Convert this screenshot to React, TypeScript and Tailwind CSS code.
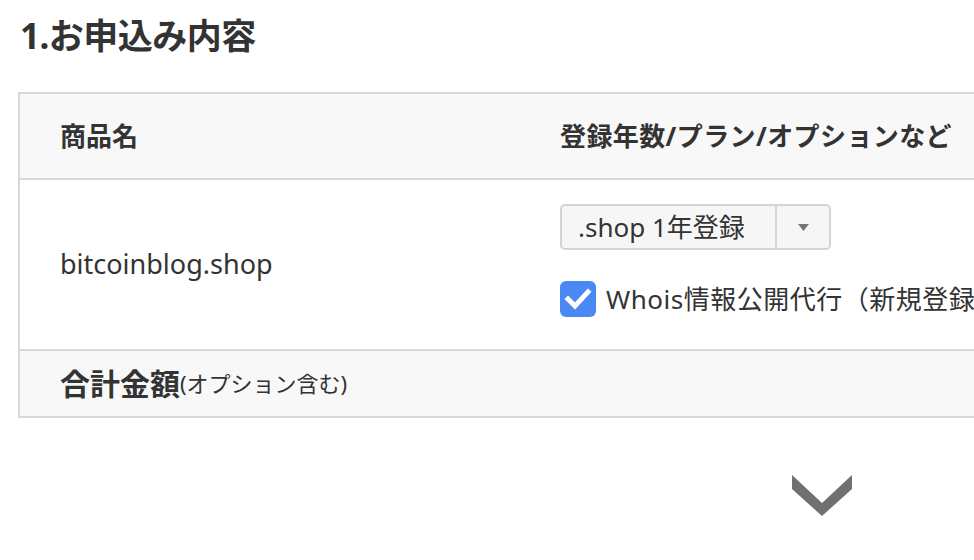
import React from "react";

export default function App() {
  const font = { fontFamily: '"Noto Sans", "Noto Sans CJK JP", sans-serif' };
  return (
    <div className="w-[974px] h-[560px] overflow-hidden bg-white text-[#333]" style={font}>
      <h1 className="pl-[20px] pt-[12px] h-[92px] text-[35px] font-bold leading-[48px] tracking-[-0.5px]">1.お申込み内容</h1>
      <div className="ml-[18px] w-[1100px] border-2 border-[#d8d8d8]">
        <div className="flex h-[86px] items-center bg-[#f8f8f8] border-b-2 border-[#d8d8d8] text-[26px] font-bold">
          <div className="w-[540px] pl-[40px]">商品名</div>
          <div className="flex-1 tracking-[0.4px]">登録年数/プラン/オプションなど</div>
        </div>
        <div className="flex h-[169px] items-center bg-white">
          <div className="w-[540px] pl-[40px] text-[27px]">bitcoinblog.shop</div>
          <div className="flex-1 flex flex-col pb-[8px]">
            <div className="flex h-[46px] w-[271px] rounded-[5px] border-2 border-[#d4d4d4] bg-[#f6f6f6]">
              <div className="flex w-[215px] items-center pl-[16px] text-[26px] border-r-2 border-[#d4d4d4]">.shop 1年登録</div>
              <div className="flex flex-1 items-center justify-center">
                <svg width="11" height="7" viewBox="0 0 11 7"><polygon points="0,0 11,0 5.5,7" fill="#777" /></svg>
              </div>
            </div>
            <div className="mt-[31px] flex h-[36px] items-center gap-[10px]">
              <div className="flex h-[36px] w-[36px] shrink-0 items-center justify-center rounded-[6px] bg-[#4a89f3]">
                <svg width="28" height="24" viewBox="0 0 28 24"><polyline points="4,12 11,19 24,5" fill="none" stroke="#fff" strokeWidth="5" strokeLinecap="square" /></svg>
              </div>
              <span className="text-[26px] whitespace-nowrap tracking-[0.5px]">Whois情報公開代行（新規登録時のみ）</span>
            </div>
          </div>
        </div>
        <div className="flex h-[67px] items-center bg-[#f8f8f8] border-t-2 border-[#d8d8d8] pl-[40px]">
          <span className="text-[30px] font-bold">合計金額</span>
          <span className="text-[22px]">(オプション含む)</span>
        </div>
      </div>
      <div className="pl-[792px] pt-[57px]">
        <svg width="60" height="42" viewBox="0 0 60 42"><polygon points="0,0 30,28 60,0 60,14 30,41 0,14" fill="#707070" /></svg>
      </div>
    </div>
  );
}
